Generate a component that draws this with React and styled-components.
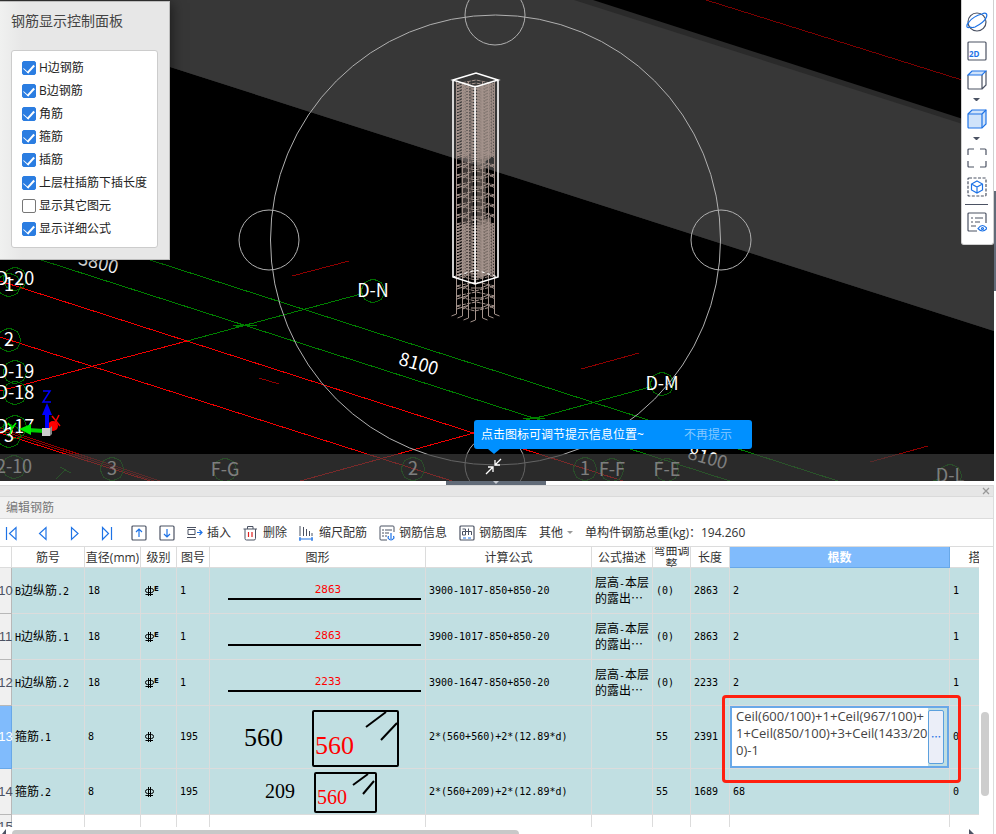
import React, { useState } from 'react';
import styled, { createGlobalStyle } from 'styled-components';

const ui = `'Open Sans', 'Noto Sans CJK SC', sans-serif`;
const mono = `'DejaVu Sans Mono', 'Noto Sans CJK SC', monospace`;
const blue = '#1e73e6';
const dark = '#4b5263';

const GlobalStyle = createGlobalStyle`
  * { box-sizing: border-box; }
  body {
    margin: 0;
    background: white;
    font-family: ${ui};
    font-size: 12px;
    line-height: 16px;
    color: #333;
  }
  button {
    font: inherit;
    color: inherit;
    border: 0;
    padding: 0;
    background: none;
    cursor: pointer;
  }
`

const Page = styled.div`
  display: flex;
  flex-direction: column;
  min-height: 100vh;
`
const Top = styled.div`
  flex: 1;
  display: flex;
  min-height: 320px;
`
const Viewport = styled.div`
  flex: 1;
  position: relative;
  overflow: hidden;
  background: black;
`
const SceneSvg = styled.svg`
  position: absolute;
  top: 0;
  left: 0;
  width: 100%;
  height: 100%;
  font-family: 'Noto Sans CJK SC', sans-serif;
  font-size: 18px;
`
const SideRail = styled.div`
  width: 2px;
  display: flex;
  flex-direction: column;
  padding-top: 191px;
`
const SideHandle = styled.div`
  height: 100px;
  background: #616b78;
`
const Panel = styled.section`
  position: absolute;
  top: 1px;
  left: 0;
  width: 170px;
  padding: 9px 11px 11px 11px;
  background: linear-gradient(to right, #f0f1f0, #e7e7e7 22px);
  border: 1px solid #bdbdbd;
  border-left: 0;
  box-shadow: 2px 2px 12px rgba(0, 0, 0, 0.5);
`
const PanelTitle = styled.h2`
  margin: 0 0 19px;
  font-size: 14px;
  line-height: 20px;
  font-weight: normal;
  color: #444;
`
const Options = styled.div`
  display: flex;
  flex-direction: column;
  gap: 7px;
  padding: 9px 8px 10px 10px;
  background: white;
  border: 1px solid #ccc;
  border-radius: 3px;
`
const Option = styled.label`
  display: flex;
  align-items: center;
  gap: 3px;
  height: 16px;
  line-height: 18px;
  white-space: nowrap;
  color: #222;
`
const Check = styled.input`
  appearance: none;
  flex: none;
  width: 14px;
  height: 14px;
  margin: 0;
  border: 1px solid #777;
  border-radius: 2px;
  background: white;
  display: grid;
  place-items: center;
  &:checked {
    background: #2b7de1;
    border-color: #2b7de1;
  }
  &:checked::after {
    content: '';
    width: 9px;
    height: 5px;
    border-left: 1px solid white;
    border-bottom: 2px solid white;
    transform: translateY(-1px) rotate(-48deg);
  }
`
const Tools = styled.div`
  position: absolute;
  top: 0;
  right: 0;
  width: 33px;
  display: flex;
  flex-direction: column;
  align-items: center;
  gap: 9px;
  padding: 12px 2px 12px 0;
  background: white;
  border: 1px solid #d0d0d0;
  border-top: 0;
  border-radius: 0 0 3px 3px;
`
const ToolButton = styled.button`
  display: block;
  line-height: 0;
`
const CaretSvg = styled.svg`
  margin: -1px 0;
`
const ToolLine = styled.hr`
  width: 23px;
  margin: -2px 0;
  border: 0;
  border-top: 1px solid #4b5263;
`
const BottomBar = styled.div`
  position: absolute;
  left: 0;
  right: 0;
  bottom: 0;
  height: 27px;
  background: rgba(63, 63, 63, 0.67);
`
const Collapse = styled.button`
  position: absolute;
  bottom: 6px;
  left: 485px;
  line-height: 0;
`
const Tip = styled.div`
  position: absolute;
  bottom: 32px;
  left: 474px;
  width: 278px;
  height: 29px;
  display: flex;
  align-items: center;
  justify-content: space-between;
  padding: 0 20px 0 7px;
  border-radius: 3px;
  background: #0090ff;
  color: white;
  &::after {
    content: '';
    position: absolute;
    top: 29px;
    left: 14px;
    border: 6px solid transparent;
    border-top: 5px solid #0090ff;
    border-bottom: 0;
  }
`
const TipButton = styled.button`
  color: #85c8ff;
`
const Splitter = styled.div`
  height: 4px;
  padding-left: 446px;
  background: white;
`
const Grip = styled.div`
  width: 100px;
  height: 4px;
  display: flex;
  justify-content: center;
  background: #616b78;
  &::after {
    content: '';
    border: 3px solid transparent;
    border-top: 3px solid #c8ccd2;
    border-bottom: 0;
  }
`
const Editor = styled.section`
  margin-right: 2px;
  border-right: 1px solid #dcdcdc;
`
const Strip = styled.div`
  height: 12px;
  display: flex;
  align-items: center;
  justify-content: flex-end;
  padding-right: 3px;
  background: #e6e6e6;
  border-top: 1px solid #d6d6d6;
  border-bottom: 1px solid #dadada;
  button { line-height: 0; }
`
const EditorTitle = styled.h2`
  height: 22px;
  margin: 0;
  padding-left: 6px;
  font-size: 12px;
  line-height: 22px;
  font-weight: normal;
  color: #777;
  background: #f1f1f1;
  border-bottom: 1px solid #dcdcdc;
`
const Toolbar = styled.div`
  display: flex;
  align-items: center;
  gap: 12px;
  height: 28px;
  padding-left: 3px;
  white-space: nowrap;
  border-bottom: 1px solid #dcdcdc;
`
const NavGroup = styled.div`
  display: flex;
  gap: 16px;
  margin-right: 4px;
`
const BarButton = styled.button`
  display: flex;
  align-items: center;
  gap: 4px;
`
const GridArea = styled.div`
  display: flex;
  height: 280px;
`
const GridClip = styled.div`
  flex: 1;
  overflow: hidden;
`
const Table = styled.table`
  width: calc(100% + 33px);
  table-layout: fixed;
  border-collapse: separate;
  border-spacing: 0;
`
const Head = styled.th`
  padding: 0;
  font-weight: ${p => (p.$active ? 'bold' : 'normal')};
  color: ${p => (p.$active ? 'white' : '#333')};
  background: ${p => (p.$active ? '#80bbfc' : 'white')};
  border-right: 1px solid ${p => (p.$active ? '#68a8e8' : '#dcdcdc')};
  border-bottom: 1px solid ${p => (p.$active ? '#68a8e8' : '#dcdcdc')};
`
const HeadText = styled.div`
  height: 20px;
  padding-top: 2px;
  display: flex;
  align-items: center;
  justify-content: center;
  line-height: 14px;
  overflow: hidden;
`
const Row = styled.tr`
  height: ${p => p.$height}px;
  background: ${p => (p.$empty ? 'white' : '#c1dfe2')};
`
const RowNo = styled.th`
  padding: 0;
  font-weight: normal;
  font-family: 'Liberation Sans', sans-serif;
  font-size: 13px;
  color: ${p => (p.$active ? 'white' : '#4b5263')};
  background: ${p => (p.$active ? '#80bbfc' : '#f0f0f0')};
  border-right: 1px solid ${p => (p.$active ? '#68a8e8' : '#b8b8b8')};
  border-bottom: 1px solid ${p => (p.$active ? '#68a8e8' : '#b8b8b8')};
  span {
    display: flex;
    justify-content: center;
    width: 11px;
  }
`
const Cell = styled.td`
  position: relative;
  padding: ${p => (p.$flush ? '0' : '0 0 0 3px')};
  font-family: ${mono};
  font-size: 10px;
  line-height: 14px;
  white-space: nowrap;
  color: black;
  border-right: 1px solid #dcdcdc;
  border-bottom: 1px solid #dcdcdc;
`
const Han = styled.span`
  font-family: 'Noto Sans CJK SC', sans-serif;
  font-size: 12px;
`
const Formula = styled.div`
  display: flex;
  height: 62px;
  padding: 2px 3px 2px 0;
  border: 2px solid #68a8e8;
`
const FormulaText = styled.textarea`
  flex: 1;
  min-width: 0;
  margin: -2px 0;
  padding: 0 0 0 4px;
  border: 0;
  outline: 0;
  resize: none;
  overflow: hidden;
  background: white;
  font-family: ${ui};
  font-size: 13px;
  line-height: 17px;
  color: #444;
  word-break: break-all;
`
const More = styled.button`
  width: 16px;
  border: 1px solid #5ba0dd;
  border-radius: 2px;
  background: #ebeef8;
  color: ${blue};
  font-family: 'Noto Sans CJK SC', sans-serif;
  font-weight: bold;
`
const Highlight = styled.div`
  position: absolute;
  inset: -11px -12px -15px -8px;
  z-index: 2;
  border: 3px solid #ff2010;
  border-radius: 4px;
  pointer-events: none;
`
const VScroll = styled.div`
  width: 14px;
  padding: 165px 4px 0 2px;
`
const VThumb = styled.div`
  height: 84px;
  border-radius: 4px;
  background: #cdcdcd;
`
const HScroll = styled.div`
  display: flex;
  align-items: flex-end;
  justify-content: space-between;
  height: 7px;
  padding-right: 18px;
`
const HThumb = styled.div`
  flex: none;
  width: 52%;
  height: 4px;
  margin-right: auto;
  border-radius: 4px 4px 0 0;
  background: #c8c8c8;
`

const options = [
  ['H边钢筋', true],
  ['B边钢筋', true],
  ['角筋', true],
  ['箍筋', true],
  ['插筋', true],
  ['上层柱插筋下插长度', true],
  ['显示其它图元', false],
  ['显示详细公式', true],
];

// grid axis bubbles: text, x, y
const axes = [
  ['D-20', 15, 279], ['1', 9, 285], ['2', 9, 340], ['D-19', 15, 372],
  ['D-18', 15, 393], ['D-17', 15, 427], ['3', 9, 436], ['2-10', 14, 467],
  ['3', 112, 469], ['F-G', 225, 470], ['D-N', 373, 291], ['2', 413, 469],
  ['1', 585, 469], ['F-F', 612, 470], ['F-E', 667, 470], ['D-M', 662, 384],
  ['D-L', 950, 476],
];

const lines = [
  ['#008000', 'M150 260L838 481M41 260L730 481M187 341L361 294M533 419L650 387'],
  ['#008000', 'M233 325H257M236 327L254 323M523 418H545M526 420L543 416'],
  ['#008000', 'M56 479L66 469M60 467L71 473M933 481L940 479'],
  ['#f00000', 'M0 281L623 481M0 337L452 481M0 391L187 341M474 433L300 481M0 433L150 481'],
  ['#8e0000', 'M0 428L160 481M0 430L154 481M292 276L349 261M259 378L279 384M581 369L639 353M870 462L928 446'],
  ['#7a0000', 'M706 0L994 90'],
];

const octagon = (x, y) => {
  const pts = [];
  for (let i = 0; i < 8; i++) {
    const a = (Math.PI / 4) * i;
    pts.push(`${(x + 12 * Math.sin(a)).toFixed(1)},${(y - 12 * Math.cos(a)).toFixed(1)}`);
  }
  return pts.join(' ');
};

const Cage = () => {
  const ties = [];
  for (let y = 84; y < 155; y += 3) ties.push(y);
  for (let y = 155; y < 222; y += 10) ties.push(y);
  for (let y = 224; y < 276; y += 3) ties.push(y);
  for (let y = 286; y < 312; y += 10) ties.push(y);
  const bars = [[456, 315], [462, 317], [468, 319], [475, 321], [482, 319], [488, 317], [494, 315]];
  return (
    <g fill="none" stroke="#a3928b">
      <path d="M477 87L491 82V158L477 166ZM477 222L491 217V274L477 279Z" fill="#9e8d86" fillOpacity=".75" stroke="none" />
      <path d="M461 82L473 87V276L461 272Z" fill="#9e8d86" fillOpacity=".4" stroke="none" />
      <path d="M477 166L486 158V222H477Z" fill="#9e8d86" fillOpacity=".5" stroke="none" />
      {bars.map(([x, y]) => (
        <path key={x} d={`M${x}.5 ${x === 475 ? 86 : 82}V${y - 1}${x > 480 ? 'l5 2' : 'l-5 2'}`} />
      ))}
      {ties.map(y => (
        <g key={y}>
          <path d={`M456 ${y}L475 ${y + 5}L495 ${y}L476 ${y - 4}Z`} strokeDasharray="4 1" />
          <path d={`M457 ${y + 3}L469 ${y - 1}L463 ${y + 3}M481 ${y + 2}L488 ${y - 1}L495 ${y + 3}M471 ${y + 2}H482`} />
        </g>
      ))}
      <g stroke="white" strokeWidth="1.6">
        <path d="M453 80L476 73L498 80L475 87ZM453 80V277L475 284L498 277V80M475 87V284" />
        <path d="M453 277L476 270L498 277" strokeWidth="1" strokeDasharray="3 3" />
      </g>
    </g>
  );
};

const Scene = () => (
  <SceneSvg viewBox="0 0 994 481" preserveAspectRatio="xMinYMin slice" aria-hidden="true">
    <path d="M0 0H593L994 129V331L170 67L0 12Z" fill="#2a2a2a" />
    <path d="M0 0H574L994 134V331L170 67L0 12Z" fill="#373737" />
    <g shapeRendering="crispEdges">
      {lines.map(([color, d], i) => <path key={i} d={d} stroke={color} fill="none" />)}
      {axes.map(([text, x, y], i) => <polygon key={i} points={octagon(x, y)} fill="none" stroke="#006c00" />)}
    </g>
    <g fill="white" textAnchor="middle">
      {axes.map(([text, x, y], i) => <text key={i} x={x} y={y + 6}>{text}</text>)}
      <text transform="translate(417 370) rotate(16)">8100</text>
      <text transform="translate(706 464) rotate(16)">8100</text>
      <text transform="translate(97 269) rotate(14)">3800</text>
    </g>
    <Cage />
    <g fill="none" stroke="#b0b0b0">
      <circle cx="495.5" cy="240" r="225" />
      <circle cx="495" cy="15" r="30" />
      <circle cx="269" cy="240" r="30" />
      <circle cx="721" cy="240" r="30" />
      <circle cx="495" cy="465" r="30" />
    </g>
    <circle cx="53" cy="426" r="5" fill="#f00" />
    <path d="M52 416L60 426M59 415L53 427" stroke="#f00" strokeWidth="1.5" />
    <path d="M47 432V412" stroke="#00f" strokeWidth="4" />
    <path d="M42 415L47 403L52 415Z" fill="#00f" />
    <path d="M43 391H50L43 402H51" stroke="#00f" strokeWidth="1.5" fill="none" />
    <path d="M44 431L28 430" stroke="#0c0" strokeWidth="4" />
    <path d="M31 424L19 429L31 435Z" fill="#0e0" />
    <path d="M8 423L12 428L16 423M12 428L10 434" stroke="#0f0" strokeWidth="1.5" fill="none" />
    <path d="M42 428H50V436H42Z" fill="#ccc" />
    <path d="M50 428L52 426V434L50 436Z" fill="#888" />
  </SceneSvg>
);

const Icon = ({ size = 20, w, children }) => (
  <svg width={w || size} height={size} viewBox={`0 0 ${w || size} ${size}`} fill="none" stroke={dark} strokeWidth="1.2" aria-hidden="true">
    {children}
  </svg>
);

const Caret = () => (
  <CaretSvg width="7" height="3" aria-hidden="true"><path d="M0 0H7L4 3H3Z" fill={dark} /></CaretSvg>
);

const ViewTools = () => (
  <Tools>
    <ToolButton aria-label="动态观察">
      <Icon w={22}>
        <circle cx="11" cy="10" r="9" />
        <path d="M4 15C0 17 0 13 3 10C6 6 12 3 16 2C20 0 22 2 20 6C18 10 13 13 9 15Q6 16 4 15" stroke={blue} />
      </Icon>
    </ToolButton>
    <ToolButton aria-label="二维">
      <Icon>
        <rect x="1" y="1" width="18" height="18" rx="1" />
        <text x="2" y="16" fill={blue} stroke="none" fontSize="8" fontWeight="bold" fontFamily="Open Sans, sans-serif">2D</text>
      </Icon>
    </ToolButton>
    <ToolButton aria-label="俯视">
      <Icon>
        <path d="M15 5V19H2Q1 19 1 18V5M15 19L19 15V1" />
        <path d="M1 5L5 1H19L15 5Z" fill="#d0e3fa" stroke={blue} />
      </Icon>
    </ToolButton>
    <Caret />
    <ToolButton aria-label="实体">
      <Icon>
        <path d="M1 5L5 1H19V15L15 19H2Q1 19 1 18Z" fill="#d0e3fa" stroke={blue} />
        <path d="M1 5H15V19M15 5L19 1" stroke={blue} />
      </Icon>
    </ToolButton>
    <Caret />
    <ToolButton aria-label="全屏">
      <Icon><path d="M1 7V2Q1 1 2 1H7M13 1H18Q19 1 19 2V7M19 13V18Q19 19 18 19H13M7 19H2Q1 19 1 18V13" /></Icon>
    </ToolButton>
    <ToolButton aria-label="局部三维">
      <Icon>
        <rect x="1" y="1" width="18" height="18" rx="1" strokeDasharray="3 1.5" />
        <path d="M10 4L15.500 7V13L10 16L4.500 13V7ZM4.500 7L10 10L15.500 7M10 10V16" stroke={blue} />
      </Icon>
    </ToolButton>
    <ToolLine />
    <ToolButton aria-label="显示设置">
      <Icon>
        <path d="M10 19H2Q1 19 1 18V2Q1 1 2 1H18Q19 1 19 2V11M4 6H6M8 6H16M4 10H6M8 10H13M4 14H9" />
        <path d="M11 16.500Q15.500 10.500 20 16.500Q15.500 21.500 11 16.500Z" stroke={blue} />
        <circle cx="15.500" cy="16.500" r="1" stroke={blue} />
      </Icon>
    </ToolButton>
  </Tools>
);

const navs = [
  ['首条', 'M3.500 2V15M13 2.500V14.500L6.500 8.500Z'],
  ['上一条', 'M11 2.500V14.500L4.500 8.500Z'],
  ['下一条', 'M4.500 2.500V14.500L11 8.500Z'],
  ['末条', 'M3.500 2.500V14.500L9.500 8.500ZM12.500 2V15'],
];

const EditToolbar = () => (
  <Toolbar>
    <NavGroup>
      {navs.map(([label, d]) => (
        <BarButton key={label} aria-label={label}>
          <Icon size={16}><path d={d} stroke={blue} /></Icon>
        </BarButton>
      ))}
    </NavGroup>
    <BarButton aria-label="上移">
      <Icon size={16}>
        <rect x="1" y="1" width="14" height="14" rx="1" />
        <path d="M8 12V4M5 7L8 4L11 7" stroke={blue} />
      </Icon>
    </BarButton>
    <BarButton aria-label="下移">
      <Icon size={16}>
        <rect x="1" y="1" width="14" height="14" rx="1" />
        <path d="M8 4V12M5 9L8 12L11 9" stroke={blue} />
      </Icon>
    </BarButton>
    <BarButton>
      <Icon size={16}>
        <path d="M0 2.500H9M1 4.500H8V9.500H1ZM0 12.500H9" strokeWidth="1" />
        <path d="M10 7.500H15M12.500 5L15 7.500L12.500 10" stroke={blue} />
      </Icon>
      插入
    </BarButton>
    <BarButton>
      <Icon size={16}>
        <path d="M0.500 4H14M4.500 4V1.500H10V4M2 4V13.500Q2 15 3.500 15H11Q12.500 15 12.500 13.500V4" strokeWidth="1" />
        <path d="M5.500 7V12M9 7V12" stroke="#e02020" />
      </Icon>
      删除
    </BarButton>
    <BarButton>
      <Icon size={16}>
        <path d="M1 1V11M4.500 2V11M7.500 4V11M10.500 6V11M13 8V11" strokeWidth="1" />
        <path d="M0 14H14M1 12V16M13 12V16" stroke={blue} />
      </Icon>
      缩尺配筋
    </BarButton>
    <BarButton>
      <Icon size={16}>
        <path d="M8 15H2Q1 15 1 14V2Q1 1 2 1H14Q15 1 15 2V7M3 5H5M6 5H13M3 8H5M6 8H10M3 11H5M6 11H8" strokeWidth="1" />
        <path d="M12 8V14M9.500 11L9 13Q12 17 15 13L14.500 11" stroke={blue} />
      </Icon>
      钢筋信息
    </BarButton>
    <BarButton>
      <Icon size={16}>
        <rect x="1" y="1" width="14" height="14" rx="1" />
        <path d="M3.500 4H6.500M3.500 10V6.500H6.500V10ZM6.500 4V6.500H12.500V10M9.500 3.500V10" strokeWidth="1" />
        <path d="M4 13H7M9 13H12" stroke={blue} strokeWidth="1" />
      </Icon>
      钢筋图库
    </BarButton>
    <BarButton>
      其他
      <svg width="6" height="3" aria-hidden="true"><path d="M0 0H6L3 3Z" fill="#999" /></svg>
    </BarButton>
    <span>单构件钢筋总重(kg)：194.260</span>
  </Toolbar>
);

const columns = [
  ['', 12], ['筋号', 73], ['直径(mm)', 56], ['级别', 36], ['图号', 33], ['图形', 216],
  ['计算公式', 166], ['公式描述', 61], ['弯曲调整', 38], ['长度', 39], ['根数', null], ['搭接', 62],
];

const rows = [
  { no: 10, name: ['B', '边纵筋', '.2'], dia: 18, grade: 'E', fig: 1, line: '2863', formula: '3900-1017-850+850-20', desc: true, bend: '(0)', len: 2863, count: 2, lap: 1 },
  { no: 11, name: ['H', '边纵筋', '.1'], dia: 18, grade: 'E', fig: 1, line: '2863', formula: '3900-1017-850+850-20', desc: true, bend: '(0)', len: 2863, count: 2, lap: 1 },
  { no: 12, name: ['H', '边纵筋', '.2'], dia: 18, grade: 'E', fig: 1, line: '2233', formula: '3900-1647-850+850-20', desc: true, bend: '(0)', len: 2233, count: 2, lap: 1 },
  { no: 13, name: ['', '箍筋', '.1'], dia: 8, fig: 195, hoop: 'big', formula: '2*(560+560)+2*(12.89*d)', bend: '55', len: 2391, lap: 0, active: true },
  { no: 14, name: ['', '箍筋', '.2'], dia: 8, fig: 195, hoop: 'small', formula: '2*(560+209)+2*(12.89*d)', bend: '55', len: 1689, count: 68, lap: 0 },
];

const Grade = ({ mark }) => (
  <svg width="18" height="12" viewBox="0 0 18 12" display="block" fill="none" stroke="black" aria-hidden="true">
    <path d="M4.500 1V11M6.500 1V11M1.500 9.500H9" />
    <rect x="1.500" y="3.500" width="8" height="4" rx="2" />
    {mark && <text x="10" y="6" fill="black" stroke="none" fontSize="7" fontWeight="bold" fontFamily="DejaVu Sans">{mark}</text>}
  </svg>
);

const BarLine = ({ length }) => (
  <svg width="215" height="45" viewBox="0 0 215 45" display="block">
    <path d="M18 31H211" stroke="black" strokeWidth="2" />
    <text x="118" y="25" textAnchor="middle" fill="red" fontSize="11" fontFamily="DejaVu Sans Mono, monospace">{length}</text>
  </svg>
);

const BigHoop = () => (
  <svg width="215" height="62" viewBox="0 0 215 62" display="block" fill="none" stroke="black" strokeWidth="2" fontFamily="Liberation Serif, serif" fontSize="26">
    <rect x="103" y="5" width="85" height="55" rx="1" />
    <path d="M156 21L176 6M171 34L187 17" />
    <text x="34" y="40" fill="black" stroke="none">560</text>
    <text x="105" y="48" fill="red" stroke="none">560</text>
  </svg>
);

const SmallHoop = () => (
  <svg width="215" height="45" viewBox="0 0 215 45" display="block" fill="none" stroke="black" strokeWidth="2" fontFamily="Liberation Serif, serif" fontSize="20">
    <rect x="105" y="4" width="61" height="39" rx="1" />
    <path d="M143 16L158 5M153 25L164 12" />
    <text x="55" y="29" fill="black" stroke="none">209</text>
    <text x="107" y="35" fill="red" stroke="none">560</text>
  </svg>
);

const CountEditor = () => {
  const [value, setValue] = useState('Ceil(600/100)+1+Ceil(967/100)+1+Ceil(850/100)+3+Ceil(1433/200)-1');
  return (
    <Formula>
      <FormulaText aria-label="根数" value={value} onChange={e => setValue(e.target.value)} spellCheck={false} />
      <More aria-label="更多">…</More>
    </Formula>
  );
};

const RebarTable = () => (
  <Table>
    <colgroup>
      {columns.map(([label, width]) => <col key={label} width={width || undefined} />)}
    </colgroup>
    <thead>
      <tr>
        {columns.map(([label]) => (
          <Head key={label} $active={label === '根数'}><HeadText>{label}</HeadText></Head>
        ))}
      </tr>
    </thead>
    <tbody>
      {rows.map(r => (
        <Row key={r.no} $height={r.active ? 63 : 46}>
          <RowNo $active={r.active}><span>{r.no}</span></RowNo>
          <Cell>{r.name[0]}<Han>{r.name[1]}</Han>{r.name[2]}</Cell>
          <Cell>{r.dia}</Cell>
          <Cell><Grade mark={r.grade} /></Cell>
          <Cell>{r.fig}</Cell>
          <Cell $flush>
            {r.line && <BarLine length={r.line} />}
            {r.hoop === 'big' && <BigHoop />}
            {r.hoop === 'small' && <SmallHoop />}
          </Cell>
          <Cell>{r.formula}</Cell>
          <Cell>{r.desc && <><Han>层高</Han>-<Han>本层<br />的露出…</Han></>}</Cell>
          <Cell>{r.bend}</Cell>
          <Cell>{r.len}</Cell>
          <Cell $flush={r.active}>{r.active ? <><CountEditor /><Highlight /></> : r.count}</Cell>
          <Cell>{r.lap}</Cell>
        </Row>
      ))}
      <Row $height={24} $empty>
        <RowNo><span>15</span></RowNo>
        {columns.slice(1).map(([label]) => <Cell key={label} />)}
      </Row>
    </tbody>
  </Table>
);

const ControlPanel = () => {
  const [checked, setChecked] = useState(options.map(o => o[1]));
  const toggle = i => setChecked(checked.map((c, j) => (i === j ? !c : c)));
  return (
    <Panel>
      <PanelTitle>钢筋显示控制面板</PanelTitle>
      <Options>
        {options.map(([label], i) => (
          <Option key={label}>
            <Check type="checkbox" checked={checked[i]} onChange={() => toggle(i)} />
            {label}
          </Option>
        ))}
      </Options>
    </Panel>
  );
};

const App = () => {
  return (
    <Page lang="zh-CN">
      <GlobalStyle />
      <Top>
        <Viewport>
          <Scene />
          <BottomBar />
          <ControlPanel />
          <ViewTools />
          <Collapse aria-label="收起">
            <svg width="17" height="17" fill="none" stroke="white" strokeWidth="1.300">
              <path d="M1 16L8 9M3 9H8V14M16 1L10 7M10 2V7H15" />
            </svg>
          </Collapse>
          <Tip>
            点击图标可调节提示信息位置~
            <TipButton>不再提示</TipButton>
          </Tip>
        </Viewport>
        <SideRail><SideHandle /></SideRail>
      </Top>
      <Splitter><Grip /></Splitter>
      <Editor>
        <Strip>
          <button aria-label="关闭">
            <svg width="8" height="8" stroke="#999" strokeWidth="1.300"><path d="M1 1L7 7M7 1L1 7" /></svg>
          </button>
        </Strip>
        <EditorTitle>编辑钢筋</EditorTitle>
        <EditToolbar />
        <GridArea>
          <GridClip><RebarTable /></GridClip>
          <VScroll><VThumb /></VScroll>
        </GridArea>
        <HScroll>
          <svg width="12" height="5" aria-hidden="true"><path d="M2 5L6 0V5Z" fill={dark} /></svg>
          <HThumb />
          <svg width="6" height="5" aria-hidden="true"><path d="M0 0L5 5H0Z" fill={dark} /></svg>
        </HScroll>
      </Editor>
    </Page>
  );
}

export default App;
